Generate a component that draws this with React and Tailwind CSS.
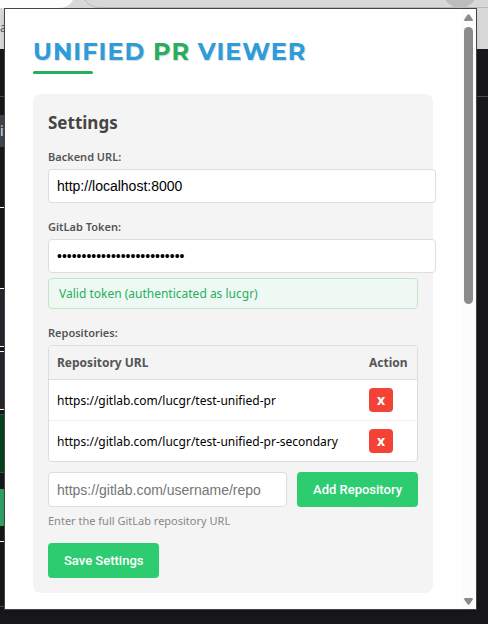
import React from "react";

const repositories = [
  "https://gitlab.com/lucgr/test-unified-pr",
  "https://gitlab.com/lucgr/test-unified-pr-secondary",
];

const ui = "font-['Noto_Sans','Open_Sans',sans-serif]";
const field =
  "block rounded border border-[#dddddd] bg-white px-2 font-['Liberation_Sans',Arial,sans-serif] text-sm text-black placeholder:text-[#757575] outline-none";
const greenButton =
  "h-[35px] shrink-0 rounded bg-[#2ecc71] px-4 font-['Roboto',Arial,sans-serif] text-[13px] font-medium text-white";
const label = "mb-1 block text-[11px] leading-4 font-semibold text-[#555555]";

function Backdrop() {
  return (
    <div className="absolute inset-0 flex flex-col overflow-hidden bg-[#18171c]" aria-hidden="true">
      <div className="relative h-[49px] shrink-0 overflow-hidden bg-[#d8d8d8]">
        <svg className="block h-[49px] w-[488px]" viewBox="0 0 488 49">
          <path d="M0 0H73C70 5 66 8 58 8H0Z" fill="#fdfdfd" />
          <path d="M85 0C89 5 93 7.500 99 7.500H488" fill="none" stroke="#b9b9b9" />
          <circle cx="460" cy="-9" r="17" fill="#bdbdbd" />
        </svg>
        <span className="absolute top-5 left-0 text-xs leading-4 text-[#555555]">a</span>
      </div>
      <div className="h-12 shrink-0 border-b border-[#4b4a50]" />
      <div className="mt-[18px] h-8 w-[5px] shrink-0 bg-[#444348] text-sm leading-8 text-[#d5e4ee]">
        it
      </div>
      <div className="flex w-[5px] grow flex-col">
        <div className="h-[61px] shrink-0 border-b border-white" />
        <div className="h-[81px] shrink-0 border-b border-white bg-[#18171c]" />
        <div className="h-[58px] shrink-0 border-b border-white bg-[#27262c]" />
        <div className="h-[5px] shrink-0 border-b border-white" />
        <div className="h-[58px] shrink-0 border-b border-white bg-[#27262c]" />
        <div className="mt-1 h-[59px] shrink-0 border-y border-[#2d5c3e] bg-[#06401d]" />
        <div className="mt-4 h-[37px] shrink-0 bg-[#2fa163]" />
        <div className="h-4 shrink-0 border-b border-white" />
        <div className="h-[65px] shrink-0 border-b border-[#4b4a50]" />
      </div>
    </div>
  );
}

function Scrollbar() {
  return (
    <div className="flex w-[15px] shrink-0 flex-col items-center bg-[#fcfcfc] pt-[5px] pb-1" aria-hidden="true">
      <svg className="h-[7px] w-[9px] shrink-0" viewBox="0 0 9 7">
        <path d="M3.500 .8Q4.500-.5 5.500 .8L8.700 5.300Q9.200 7 8 7H1Q-.2 7 .3 5.300Z" fill="#8b8b8b" />
      </svg>
      <div className="mt-[6px] flex w-[9px] grow flex-col">
        <div className="h-[277px] rounded-full bg-[#8b8b8b]" />
      </div>
      <svg className="h-[7px] w-[9px] shrink-0" viewBox="0 0 9 7">
        <path d="M3.500 6.200Q4.500 7.500 5.500 6.200L8.700 1.700Q9.200 0 8 0H1Q-.2 0 .3 1.700Z" fill="#8b8b8b" />
      </svg>
    </div>
  );
}

export default function App() {
  return (
    <div className={`relative min-h-screen pt-2 pr-[11px] pb-[14px] pl-1 ${ui}`}>
      <Backdrop />
      <div className="relative flex border border-[#444444] bg-white shadow-md">
        <main className="min-w-0 grow px-7 pt-[27px] pb-4">
          <h1 className="font-['Montserrat','Inter',sans-serif] text-2xl leading-8 font-bold tracking-[1px] whitespace-nowrap text-[#2d9cdb] uppercase [text-shadow:1px_1px_1px_rgba(0,0,0,0.15)]">
            Unified <span className="text-[#27ae60]">PR</span> Viewer
          </h1>
          <div className="mt-[3px] h-[3px] w-[60px] rounded-sm bg-[#27ae60]" />

          <section className="mt-5 rounded-lg bg-[#f4f4f4] p-[15px]">
            <h2 className="pt-0.5 text-[17px] leading-6 font-bold text-[#444444]">Settings</h2>

            <div className="mt-[14px]">
              <label htmlFor="backend" className={label}>Backend URL:</label>
              <input id="backend" type="text" defaultValue="http://localhost:8000" className={`${field} h-[34px] w-[calc(100%+18px)]`} />
            </div>

            <div className="mt-4">
              <label htmlFor="token" className={label}>GitLab Token:</label>
              <input id="token" type="password" defaultValue="abcdefghijklmnopqrstuvwxyz" className={`${field} h-[34px] w-[calc(100%+18px)]`} />
              <p role="status" className="mt-[5px] rounded border border-[#c3e6cb] bg-[#eef9f4] px-[10px] py-[5px] text-xs leading-[19px] text-[#27ae60]">
                Valid token (authenticated as lucgr)
              </p>
            </div>

            <div className="mt-4">
              <label htmlFor="repo" className={label}>Repositories:</label>
              <div className="overflow-hidden rounded border border-[#dddddd] bg-white">
                <table className="w-full border-collapse text-xs leading-[18px] text-black">
                  <thead>
                    <tr className="h-[33px] border-b border-[#dddddd] bg-[#f4f4f4] text-left text-[#555555]">
                      <th className="px-2 pt-0.5 font-bold">Repository URL</th>
                      <th className="w-14 px-2 pt-0.5 font-bold">Action</th>
                    </tr>
                  </thead>
                  <tbody>
                    {repositories.map((url) => (
                      <tr key={url} className="h-[41px] border-b border-[#eeeeee] last:border-b-0">
                        <td className="px-2 pt-0.5 whitespace-nowrap">{url}</td>
                        <td className="px-2">
                          <button type="button" aria-label={`Remove ${url}`} className="block size-6 rounded bg-[#f44336] text-sm leading-6 font-bold text-white">
                            x
                          </button>
                        </td>
                      </tr>
                    ))}
                  </tbody>
                </table>
              </div>
              <div className="mt-[10px] flex gap-[10px]">
                <input id="repo" type="text" placeholder="https://gitlab.com/username/repo" className={`${field} h-[35px] min-w-0 grow`} />
                <button type="button" className={greenButton}>Add Repository</button>
              </div>
              <p className="mt-[6px] text-[11px] leading-4 text-[#888888]">Enter the full GitLab repository URL</p>
            </div>

            <button type="button" className={`${greenButton} mt-[14px] block`}>Save Settings</button>
          </section>
        </main>
        <Scrollbar />
      </div>
    </div>
  );
}
